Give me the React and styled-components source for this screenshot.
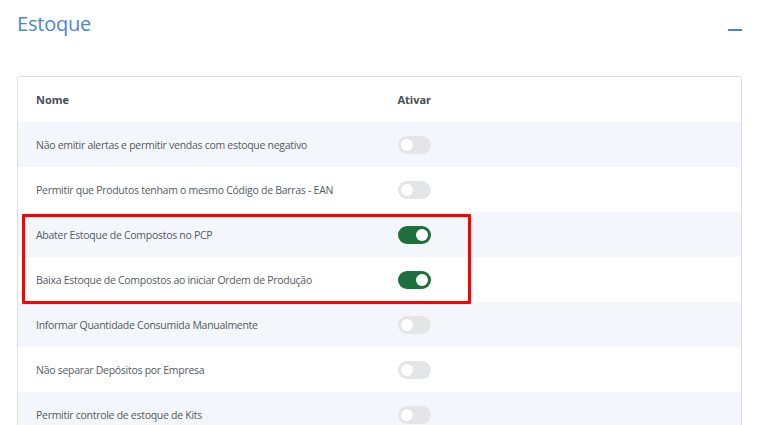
import styled, { createGlobalStyle } from "styled-components";

const GlobalStyle = createGlobalStyle`
  body {
    margin: 0;
    background: #ffffff;
    font-family: "Open Sans", "Liberation Sans", sans-serif;
  }
`;

const Page = styled.div`
  padding: 10px 19px 0 17px;
  height: 425px;
  overflow: hidden;
  box-sizing: border-box;
`;

const Header = styled.div`
  display: flex;
  align-items: center;
  justify-content: space-between;
  height: 28px;
  margin-bottom: 38px;
`;

const Title = styled.h2`
  margin: 0;
  font-size: 20px;
  font-weight: 400;
  color: #4a87d6;
  line-height: 28px;
  letter-spacing: -0.2px;
`;

const Collapse = styled.span`
  display: block;
  width: 14px;
  height: 2px;
  background: #3f86d8;
  margin-top: 12px;
`;

const Card = styled.div`
  position: relative;
  border: 1px solid #dcdfe5;
  border-radius: 2px;
  background: #fff;
`;

const Row = styled.div`
  display: grid;
  grid-template-columns: 1fr 1fr;
  align-items: center;
  height: 45px;
  background: ${(p) => (p.$shade ? "#f3f6fb" : "#ffffff")};
`;

const Cell = styled.div`
  padding: 0 18px;
  font-size: 10.5px;
  letter-spacing: -0.28px;
  color: #555b63;
`;

const HeadCell = styled(Cell)`
  font-weight: 700;
  color: #474d55;
  font-size: 11px;
  letter-spacing: 0;
`;

const Toggle = styled.span`
  display: block;
  position: relative;
  width: 33px;
  height: 18px;
  border-radius: 9px;
  background: ${(p) => (p.$on ? "#1e6e3e" : "#e4e5e7")};

  &::after {
    content: "";
    position: absolute;
    top: 3px;
    left: ${(p) => (p.$on ? "18px" : "3px")};
    width: 12px;
    height: 12px;
    border-radius: 50%;
    background: #fff;
  }
`;

const Highlight = styled.div`
  position: absolute;
  left: 4px;
  top: 137px;
  width: 443px;
  height: 84px;
  border: 3px solid #ff0000;
  border-radius: 1px;
  pointer-events: none;
`;

const rows = [
  { name: "Não emitir alertas e permitir vendas com estoque negativo", on: false },
  { name: "Permitir que Produtos tenham o mesmo Código de Barras - EAN", on: false },
  { name: "Abater Estoque de Compostos no PCP", on: true },
  { name: "Baixa Estoque de Compostos ao iniciar Ordem de Produção", on: true },
  { name: "Informar Quantidade Consumida Manualmente", on: false },
  { name: "Não separar Depósitos por Empresa", on: false },
  { name: "Permitir controle de estoque de Kits", on: false },
];

function App() {
  return (
    <>
      <GlobalStyle />
      <Page>
        <Header>
          <Title>Estoque</Title>
          <Collapse />
        </Header>
        <Card>
          <Row>
            <HeadCell>Nome</HeadCell>
            <HeadCell>Ativar</HeadCell>
          </Row>
          {rows.map((r, i) => (
            <Row key={r.name} $shade={i % 2 === 0}>
              <Cell>{r.name}</Cell>
              <Cell>
                <Toggle $on={r.on} />
              </Cell>
            </Row>
          ))}
          <Highlight />
        </Card>
      </Page>
    </>
  );
}

export default App;
